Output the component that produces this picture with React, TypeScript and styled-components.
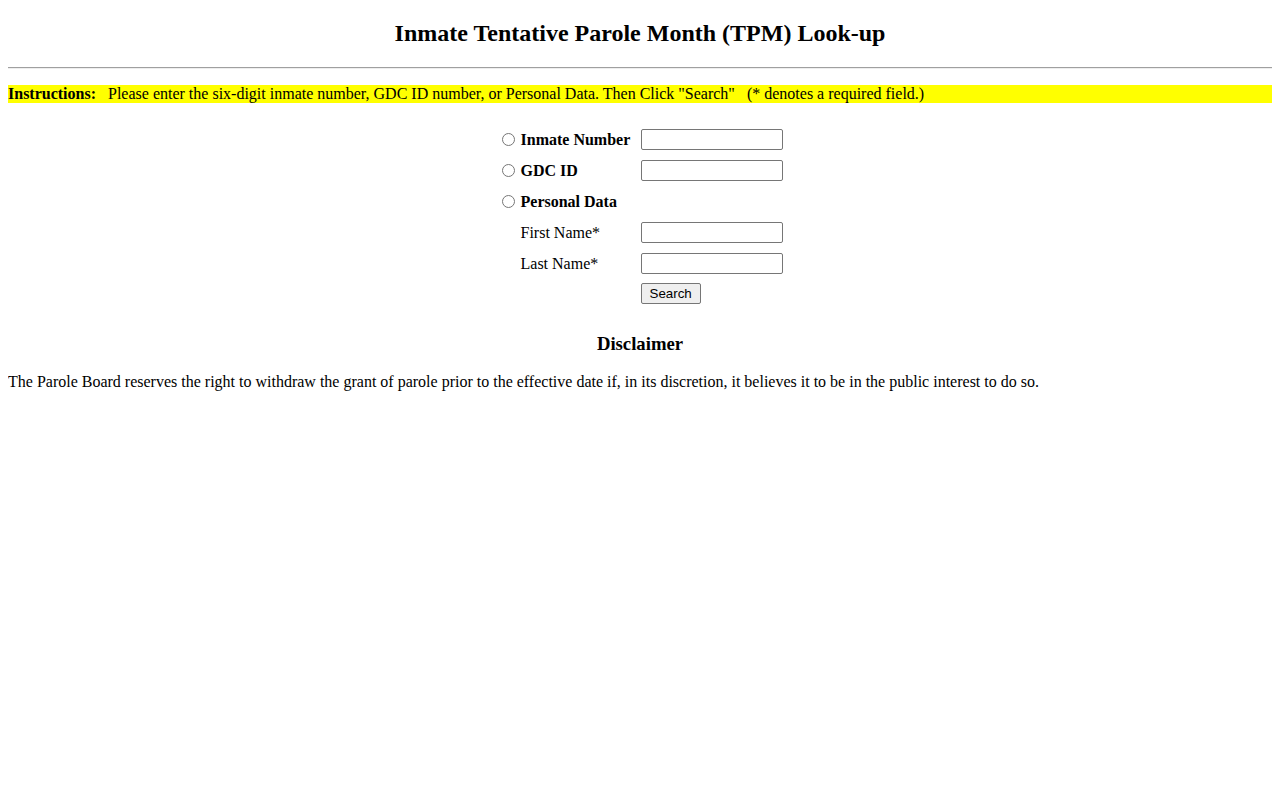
import React from "react"
import styled, { createGlobalStyle } from "styled-components"

const GlobalStyle = createGlobalStyle`
  body {
    margin: 0 8px 8px;
    background: #fff;
    color: #000;
    font-family: "Liberation Serif", "Times New Roman", serif;
    font-size: 16px;
  }
`

const Title = styled.h2`
  font-size: 1.5em;
  font-weight: bold;
  text-align: center;
  margin: 0.83em 0;
`

const Rule = styled.hr`
  border: 0;
  border-top: 1px solid #a0a0a0;
  border-bottom: 1px solid #eee;
  margin: 0;
`

const Instructions = styled.div`
  margin-top: 16px;
  background: #ffff00;
  white-space: pre;
  line-height: 18px;
`

const SearchForm = styled.form`
  display: grid;
  grid-template-columns: 19px 120px 142px;
  grid-auto-rows: 31px;
  align-items: center;
  justify-content: center;
  margin: 21px 0 0;
  padding-left: 4px;
`

const Radio = styled.input.attrs({ type: "radio", name: "searchBy" })`
  margin: 0 3px 0 0;
  width: 13px;
  height: 13px;
  accent-color: #767676;
`

const Label = styled.label<{ $bold?: boolean }>`
  grid-column: 2;
  font-weight: ${(p) => (p.$bold ? "bold" : "normal")};
  white-space: nowrap;
  padding-top: 1px;
`

const TextBox = styled.input.attrs({ type: "text" })`
  grid-column: 3;
  box-sizing: border-box;
  width: 142px;
  height: 21px;
  border: 1px solid #767676;
  border-radius: 2px;
  padding: 1px 2px;
  font: 13.33px Arial, "Liberation Sans", sans-serif;
`

const Button = styled.button`
  grid-column: 3;
  justify-self: start;
  height: 21px;
  padding: 1px 8px;
  margin-top: -2px;
  font: 13.33px Arial, "Liberation Sans", sans-serif;
  color: #000;
  background: #efefef;
  border: 1px solid #767676;
  border-radius: 2px;
`

const SubTitle = styled.h3`
  font-size: 1.17em;
  font-weight: bold;
  text-align: center;
  margin: 23px 0 18px;
`

const Text = styled.p`
  margin: 0;
`

const App: React.FC = () => {
  return (
    <>
      <GlobalStyle />
      <Title>Inmate Tentative Parole Month (TPM) Look-up</Title>
      <Rule />
      <Instructions>
        <b>Instructions:</b>
        {"   Please enter the six-digit inmate number, GDC ID number, or Personal Data. Then Click \"Search\"   (* denotes a required field.)"}
      </Instructions>
      <SearchForm onSubmit={(e) => e.preventDefault()}>
        <Radio id="byInmate" />
        <Label $bold htmlFor="byInmate">Inmate Number</Label>
        <TextBox />

        <Radio id="byGdc" />
        <Label $bold htmlFor="byGdc">GDC ID</Label>
        <TextBox />

        <Radio id="byPersonal" />
        <Label $bold htmlFor="byPersonal">Personal Data</Label>
        <span />

        <Label>First Name*</Label>
        <TextBox />

        <Label>Last Name*</Label>
        <TextBox />

        <Button type="submit">Search</Button>
      </SearchForm>
      <SubTitle>Disclaimer</SubTitle>
      <Text>
        The Parole Board reserves the right to withdraw the grant of parole prior to the effective
        date if, in its discretion, it believes it to be in the public interest to do so.
      </Text>
    </>
  )
}

export default App
